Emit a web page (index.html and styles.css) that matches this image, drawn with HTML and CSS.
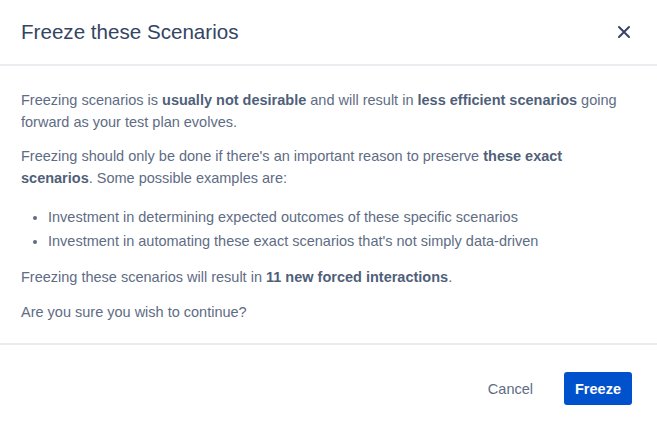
FILE: index.html
```html
<!DOCTYPE html>
<html>
<head>
<meta charset="utf-8">
<link rel="stylesheet" href="styles.css">
</head>
<body>
<div class="modal">
  <header class="modal-header">
    <h1 class="title">Freeze these Scenarios</h1>
    <button class="close" aria-label="Close">
      <svg width="14" height="14" viewBox="0 0 14 14"><path d="M2 2 L12 12 M12 2 L2 12" stroke="#344563" stroke-width="2" stroke-linecap="round"/></svg>
    </button>
  </header>
  <main class="modal-body">
    <p>Freezing scenarios is <b>usually not desirable</b> and will result in <b>less efficient scenarios</b> going forward as your test plan evolves.</p>
    <p>Freezing should only be done if there's an important reason to preserve <b>these exact scenarios</b>. Some possible examples are:</p>
    <ul>
      <li>Investment in determining expected outcomes of these specific scenarios</li>
      <li>Investment in automating these exact scenarios that's not simply data-driven</li>
    </ul>
    <p>Freezing these scenarios will result in <b>11 new forced interactions</b>.</p>
    <p>Are you sure you wish to continue?</p>
  </main>
  <footer class="modal-footer">
    <button class="btn btn-subtle">Cancel</button>
    <button class="btn btn-primary">Freeze</button>
  </footer>
</div>
</body>
</html>
```

FILE: styles.css
```css
html, body {
  margin: 0;
  padding: 0;
  background: #fff;
}
body {
  font-family: "Liberation Sans", Arial, sans-serif;
  color: #5e6c84;
}
.modal {
  width: 657px;
  height: 429px;
  display: flex;
  flex-direction: column;
}
.modal-header {
  height: 66px;
  box-sizing: border-box;
  padding: 0 26px 0 21px;
  display: flex;
  align-items: center;
  justify-content: space-between;
  border-bottom: 2px solid #ebecf0;
}
.title {
  margin: 0;
  font-size: 20.6px;
  font-weight: 400;
  color: #344563;
}
.close {
  border: 0;
  background: none;
  padding: 0;
  width: 14px;
  height: 14px;
  display: flex;
}
.modal-body {
  padding: 24px 21px 20px;
  font-size: 14.5px;
  line-height: 21.5px;
  border-bottom: 2px solid #ebecf0;
}
.modal-body p {
  margin: 0 0 13px;
}
.modal-body p:last-child {
  margin-bottom: 0;
}
.modal-body b {
  font-weight: 700;
  color: #505f79;
}
.modal-body ul {
  margin: 16px 0 14px;
  padding-left: 27px;
}
.modal-body li {
  line-height: 24px;
}
.modal-footer {
  display: flex;
  justify-content: flex-end;
  align-items: center;
  gap: 19px;
  padding: 27px 25px 0;
}
.btn {
  font-family: inherit;
  font-size: 14.5px;
  border: 0;
  border-radius: 3px;
  height: 33px;
  padding: 0 12px;
  cursor: pointer;
}
.btn-subtle {
  background: none;
  color: #5e6c84;
}
.btn-primary {
  background: #0052cc;
  color: #fff;
  font-weight: 700;
  width: 68px;
  padding: 0;
}
```
